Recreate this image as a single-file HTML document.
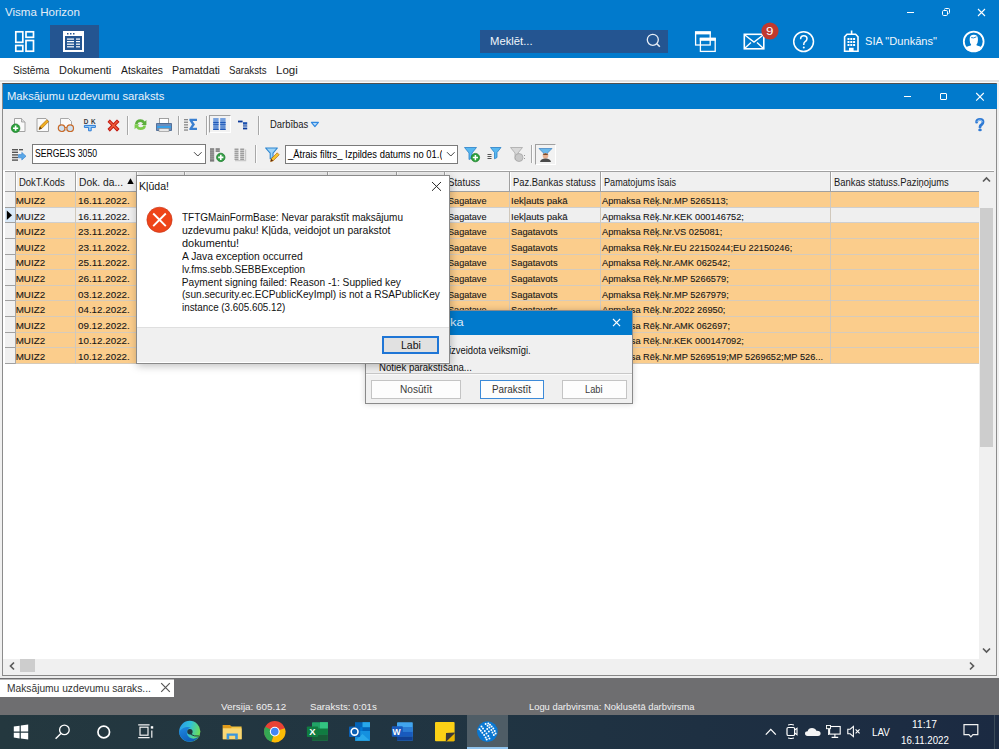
<!DOCTYPE html>
<html><head><meta charset="utf-8">
<style>
*{margin:0;padding:0;box-sizing:border-box}
html,body{width:999px;height:749px;overflow:hidden;background:#f0f0f0;font-family:"Liberation Sans",sans-serif;font-size:12px;color:#000;position:relative}
.a{position:absolute}
.t{position:absolute;white-space:pre;transform-origin:0 0}
svg{overflow:visible}
</style></head><body>
<div class="a" style="left:0px;top:0px;width:999px;height:58px;background:#017acc"></div>
<div class="t" style="left:4.71px;top:7.27px;font-size:11.5px;line-height:11.5px;color:#e4edf7;transform:scaleX(1.0055)">Visma Horizon</div>
<div class="a" style="left:907px;top:12px;width:7px;height:1px;background:#fff"></div>
<svg class="a" style="left:941px;top:7px;" width="10" height="10" viewBox="0 0 10 10"><rect x="1.5" y="3.5" width="5" height="5" rx="1.2" fill="none" stroke="#fff" stroke-width="1"/><path d="M3.5 2.5 Q3.5 1.5 4.5 1.5 H7.5 Q8.5 1.5 8.5 2.5 V5.5 Q8.5 6.5 7.5 6.5" fill="none" stroke="#fff" stroke-width="1"/></svg>
<svg class="a" style="left:977px;top:8px;" width="9" height="9" viewBox="0 0 9 9"><path d="M1 1 L8 8 M8 1 L1 8" stroke="#fff" stroke-width="1.1"/></svg>
<svg class="a" style="left:13px;top:29px;" width="23" height="25" viewBox="0 0 23 25"><g fill="none" stroke="#fff" stroke-width="1.7"><rect x="2.8" y="2.8" width="7" height="10.5"/><rect x="13" y="2.8" width="7.5" height="5.5"/><rect x="2.8" y="16.5" width="7" height="5.7"/><rect x="13" y="11.5" width="7.5" height="10.7"/></g></svg>
<div class="a" style="left:50px;top:25px;width:49px;height:33px;background:#245591"></div>
<svg class="a" style="left:62px;top:30px;" width="23" height="23" viewBox="0 0 23 23"><rect x="1" y="1" width="21" height="21" fill="#fff"/><rect x="3" y="6" width="17" height="14" fill="#245591"/><g fill="#245591"><rect x="5" y="3" width="1.5" height="1.5"/><rect x="8" y="3" width="1.5" height="1.5"/><rect x="11" y="3" width="1.5" height="1.5"/></g><g fill="#fff"><rect x="5" y="8.5" width="7" height="1.2"/><rect x="14" y="8.5" width="4" height="1.2"/><rect x="5" y="11" width="7" height="1.2"/><rect x="14" y="11" width="4" height="1.2"/><rect x="5" y="13.6" width="7" height="1.2"/><rect x="14" y="13.6" width="4" height="1.2"/><rect x="5" y="16.2" width="7" height="1.2"/><rect x="14" y="16.2" width="4" height="1.2"/></g></svg>
<div class="a" style="left:480px;top:30px;width:188px;height:22.5px;background:#245591"></div>
<div class="t" style="left:490.32px;top:36.11px;font-size:10.5px;line-height:10.5px;color:#f2f6fb;transform:scaleX(1.0721)">Meklēt...</div>
<svg class="a" style="left:645px;top:32px;" width="17" height="17" viewBox="0 0 17 17"><circle cx="7.8" cy="7.8" r="5.5" fill="none" stroke="#e8eef6" stroke-width="1.3"/><path d="M11.8 11.8 L14.8 14.8" stroke="#e8eef6" stroke-width="1.6"/></svg>
<svg class="a" style="left:694px;top:30px;" width="23" height="23" viewBox="0 0 23 23"><g fill="none" stroke="#fff" stroke-width="1.3"><rect x="1.6" y="2" width="14.6" height="13"/><rect x="6.4" y="8.4" width="14.8" height="13"/></g><rect x="1" y="1.4" width="15.8" height="3" fill="#fff"/><rect x="5.8" y="7.8" width="16" height="3" fill="#fff"/></svg>
<svg class="a" style="left:742px;top:32px;" width="24" height="19" viewBox="0 0 24 19"><rect x="2.3" y="2.3" width="19.5" height="14.5" fill="none" stroke="#fff" stroke-width="1.6"/><path d="M2.5 2.8 L12 10 L21.5 2.8 M2.5 16.5 L9 10.5 M21.5 16.5 L15 10.5" fill="none" stroke="#fff" stroke-width="1.4"/></svg>
<svg class="a" style="left:761px;top:22px;" width="18" height="18" viewBox="0 0 18 18"><circle cx="9" cy="9" r="8.6" fill="#c0392f"/></svg>
<div class="t" style="left:766.20px;top:27.24px;font-size:10px;line-height:10px;color:#fff;transform:scaleX(1.3295)">9</div>
<svg class="a" style="left:792px;top:30px;" width="24" height="24" viewBox="0 0 24 24"><circle cx="11.6" cy="11.6" r="9.9" fill="none" stroke="#fff" stroke-width="1.5"/></svg>
<svg class="a" style="left:792px;top:30px;" width="24" height="24" viewBox="0 0 24 24"><path d="M8.6 9.2 Q8.6 5.8 11.8 5.8 Q15 5.8 15 8.8 Q15 10.6 12.9 11.8 Q11.8 12.5 11.8 14.2 V15" fill="none" stroke="#fff" stroke-width="1.5"/><circle cx="11.8" cy="17.4" r="1" fill="#fff"/></svg>
<svg class="a" style="left:842px;top:29px;" width="19" height="25" viewBox="0 0 19 25"><g fill="none" stroke="#fff" stroke-width="1.6"><path d="M2.6 22.2 V7.8 L5 5.2 H13.6 L16 7.8 V22.2 Z"/></g><rect x="8.8" y="1.5" width="1.6" height="4" fill="#fff"/><g fill="#fff"><rect x="5.5" y="9" width="2" height="2"/><rect x="8.3" y="9" width="2" height="2"/><rect x="11.1" y="9" width="2" height="2"/><rect x="5.5" y="12" width="2" height="2"/><rect x="8.3" y="12" width="2" height="2"/><rect x="11.1" y="12" width="2" height="2"/><rect x="5.5" y="15" width="2" height="2"/><rect x="8.3" y="15" width="2" height="2"/><rect x="11.1" y="15" width="2" height="2"/><rect x="7" y="18.8" width="4.6" height="3.4"/></g></svg>
<div class="t" style="left:864.93px;top:35.99px;font-size:11px;line-height:11px;color:#f2f6fb;transform:scaleX(1.0088)">SIA "Dunkāns"</div>
<svg class="a" style="left:961px;top:29px;" width="26" height="26" viewBox="0 0 26 26"><circle cx="12.7" cy="12.5" r="9.9" fill="none" stroke="#fff" stroke-width="1.8"/><path d="M4.4 19.4 Q5.8 17.4 9.6 16.6 Q10.2 16.2 10.1 15.4 Q8.7 13.8 8.7 11.4 V9.8 Q8.7 5.8 12.8 5.8 Q16.9 5.8 16.9 9.8 V11.4 Q16.9 13.8 15.5 15.4 Q15.4 16.2 16 16.6 Q19.8 17.4 21.2 19.4 Q18.2 22.6 12.8 22.6 Q7.4 22.6 4.4 19.4 Z" fill="#fff"/><path d="M10.2 8.6 Q12.6 9.6 15.4 7.8" stroke="#017acc" stroke-width="0.9" fill="none"/></svg>
<div class="a" style="left:0px;top:58px;width:999px;height:22px;background:#fff"></div>
<div class="t" style="left:13.30px;top:65.11px;font-size:10.8px;line-height:10.8px;color:#1a1a1a;transform:scaleX(0.9332)">Sistēma</div>
<div class="t" style="left:59.24px;top:65.11px;font-size:10.8px;line-height:10.8px;color:#1a1a1a;transform:scaleX(1.0117)">Dokumenti</div>
<div class="t" style="left:120.98px;top:65.11px;font-size:10.8px;line-height:10.8px;color:#1a1a1a;transform:scaleX(0.9549)">Atskaites</div>
<div class="t" style="left:172.06px;top:65.11px;font-size:10.8px;line-height:10.8px;color:#1a1a1a;transform:scaleX(0.9867)">Pamatdati</div>
<div class="t" style="left:229.02px;top:65.11px;font-size:10.8px;line-height:10.8px;color:#1a1a1a;transform:scaleX(0.8915)">Saraksts</div>
<div class="t" style="left:275.71px;top:65.11px;font-size:10.8px;line-height:10.8px;color:#1a1a1a;transform:scaleX(1.0666)">Logi</div>
<div class="a" style="left:0px;top:80px;width:999px;height:2.2px;background:#e2e2e2"></div>
<div class="a" style="left:0px;top:82.2px;width:999px;height:1px;background:#fafafa"></div>
<div class="a" style="left:2px;top:83px;width:995px;height:593px;background:#f0f0f0;border:1px solid #8c8c8c;border-top-color:#505050;border-bottom-color:#888"></div>
<div class="a" style="left:3px;top:84px;width:994px;height:25px;background:#017acc"></div>
<div class="t" style="left:7.23px;top:90.89px;font-size:11px;line-height:11px;color:#eaf2fa;transform:scaleX(1.0207)">Maksājumu uzdevumu saraksts</div>
<div class="a" style="left:903.5px;top:96px;width:7.5px;height:1px;background:#fff"></div>
<div class="a" style="left:940.3px;top:93.2px;width:6.6px;height:6.6px;border:1.1px solid #fff;border-radius:1px"></div>
<svg class="a" style="left:975px;top:92px;" width="10" height="10" viewBox="0 0 10 10"><path d="M1.2 1 L8.8 8.6 M8.8 1 L1.2 8.6" stroke="#fff" stroke-width="1.1"/></svg>
<div class="a" style="left:3px;top:170px;width:991px;height:489px;background:#fff"></div>
<div class="a" style="left:5px;top:171px;width:989px;height:1px;background:#a0a0a0"></div>
<div class="a" style="left:0px;top:676px;width:999px;height:2px;background:#ececec"></div>
<div class="a" style="left:0px;top:678px;width:999px;height:36.5px;background:#6e6e70"></div>
<div class="a" style="left:0px;top:678.5px;width:174px;height:18.3px;background:#fff;border-top:1px solid #b8b8b8"></div>
<div class="t" style="left:6.59px;top:682.53px;font-size:10.6px;line-height:10.6px;color:#333;transform:scaleX(0.9655)">Maksājumu uzdevumu saraks...</div>
<svg class="a" style="left:160px;top:682px;" width="11" height="11" viewBox="0 0 11 11"><path d="M1.2 1.2 L9.8 9.8 M9.8 1.2 L1.2 9.8" stroke="#555" stroke-width="1.2"/></svg>
<div class="t" style="left:220.91px;top:701.80px;font-size:9.8px;line-height:9.8px;color:#f0f0f0;transform:scaleX(1.0055)">Versija: 605.12</div>
<div class="t" style="left:309.72px;top:701.80px;font-size:9.8px;line-height:9.8px;color:#f0f0f0;transform:scaleX(0.9901)">Saraksts: 0:01s</div>
<div class="t" style="left:529.14px;top:701.80px;font-size:9.8px;line-height:9.8px;color:#f0f0f0;transform:scaleX(0.9559)">Logu darbvirsma: Noklusētā darbvirsma</div>
<div class="a" style="left:0px;top:714.5px;width:999px;height:34.5px;background:linear-gradient(90deg,#24383f,#203442 50%,#1b2a42)"></div>
<div class="a" style="left:127px;top:115.5px;width:1px;height:19.0px;background:#a8a8a8"></div>
<div class="a" style="left:128px;top:115.5px;width:1px;height:19.0px;background:#fcfcfc"></div>
<div class="a" style="left:178px;top:115.5px;width:1px;height:19.0px;background:#a8a8a8"></div>
<div class="a" style="left:179px;top:115.5px;width:1px;height:19.0px;background:#fcfcfc"></div>
<div class="a" style="left:205.5px;top:115.5px;width:1px;height:19.0px;background:#a8a8a8"></div>
<div class="a" style="left:206.5px;top:115.5px;width:1px;height:19.0px;background:#fcfcfc"></div>
<div class="a" style="left:257.5px;top:115.5px;width:1px;height:19.0px;background:#a8a8a8"></div>
<div class="a" style="left:258.5px;top:115.5px;width:1px;height:19.0px;background:#fcfcfc"></div>
<svg class="a" style="left:11px;top:117px;" width="16" height="16" viewBox="0 0 16 16"><path d="M3.5 1.5 H10.5 L14 5 V14.5 H3.5 Z" fill="#fafafa" stroke="#9a9a9a" stroke-width="0.9"/><path d="M10.5 1.5 V5 H14" fill="#ddd" stroke="#9a9a9a" stroke-width="0.8"/><circle cx="4.6" cy="11.2" r="4.3" fill="#2aa13a" stroke="#1d7a2a" stroke-width="0.7"/><path d="M4.6 8.6 V13.8 M2 11.2 H7.2" stroke="#fff" stroke-width="1.6"/></svg>
<svg class="a" style="left:35px;top:117px;" width="16" height="16" viewBox="0 0 16 16"><path d="M2 1.5 H11 L13.5 4 V14.5 H2 Z" fill="#fafafa" stroke="#9a9a9a" stroke-width="0.9"/><path d="M4 12.5 L5 9.5 L11.8 2.8 L13.6 4.6 L6.8 11.4 Z" fill="#f0b020" stroke="#b06a10" stroke-width="0.7"/><path d="M4 12.5 L5 9.5 L6.8 11.4 Z" fill="#5a3a1a"/></svg>
<svg class="a" style="left:57px;top:117px;" width="18" height="16" viewBox="0 0 18 16"><path d="M3.5 1.5 H11.5 L14.5 4.5 V13 H3.5 Z" fill="#fafafa" stroke="#a0a0a0" stroke-width="0.9"/><circle cx="4.6" cy="11.2" r="3.3" fill="#cfe0f0" stroke="#c86a28" stroke-width="1.2"/><circle cx="13.2" cy="11.2" r="3.3" fill="#cfe0f0" stroke="#c86a28" stroke-width="1.2"/><path d="M7.9 10.6 H9.9" stroke="#c86a28" stroke-width="1"/></svg>
<svg class="a" style="left:83px;top:117px;" width="14" height="16" viewBox="0 0 14 16"><text x="0.8" y="6.6" font-family="Liberation Sans" font-size="6.4" font-weight="700" fill="#3a3a3a">D</text><text x="8" y="6.6" font-family="Liberation Sans" font-size="6.4" font-weight="700" fill="#3a3a3a">K</text><path d="M1.4 8.4 H12.4 V10.4 H8.2 V13.8 H5.6 V10.4 H1.4 Z" fill="#9ccff6" stroke="#2a7ad6" stroke-width="1" stroke-linejoin="round"/></svg>
<svg class="a" style="left:106px;top:118px;" width="15" height="15" viewBox="0 0 15 15"><path d="M2.2 3.8 L3.8 2.2 L7.4 5.8 L11 2.2 L12.8 3.8 L9.2 7.4 L12.8 11 L11 12.8 L7.4 9.2 L3.8 12.8 L2.2 11 L5.8 7.4 Z" fill="#f2603a" stroke="#c41e16" stroke-width="1.1" stroke-linejoin="round"/></svg>
<svg class="a" style="left:132px;top:117px;" width="17" height="15" viewBox="0 0 17 15"><path d="M3 7 Q3.5 2.2 8.5 2.2 Q11.4 2.2 12.8 4.4 L14.4 3 V8 H9.4 L11 6.4 Q10.2 4.9 8.5 4.9 Q6 4.9 5.6 7 Z" fill="#5cae3c"/><path d="M14 8.4 Q13.5 13 8.5 13 Q5.6 13 4.2 10.8 L2.6 12.2 V7.2 H7.6 L6 8.8 Q6.8 10.3 8.5 10.3 Q11 10.3 11.4 8.4 Z" fill="#7ccc4c"/></svg>
<svg class="a" style="left:155px;top:117px;" width="18" height="16" viewBox="0 0 18 16"><rect x="4.5" y="1.5" width="9" height="5" fill="#fff" stroke="#8a8a8a" stroke-width="0.8"/><path d="M1.5 6.5 H16.5 V13.5 H1.5 Z" fill="#6c8ebc" stroke="#3e5e8a" stroke-width="0.8"/><rect x="2" y="9" width="14" height="2" fill="#3aa0e8"/><rect x="4" y="11.5" width="10" height="3" fill="#e8e8e8" stroke="#888" stroke-width="0.6"/></svg>
<svg class="a" style="left:183px;top:117px;" width="16" height="15" viewBox="0 0 16 15"><g fill="#888"><rect x="1" y="2" width="4" height="1.3"/><rect x="1" y="4.6" width="4" height="1.3"/><rect x="1" y="7.2" width="4" height="1.3"/><rect x="1" y="9.8" width="4" height="1.3"/><rect x="1" y="12.4" width="4" height="1.3"/></g><path d="M6.4 1.8 H14 V4 H9.6 L12 7.4 L9.6 10.8 H14 V13 H6.4 V11.4 L9 7.4 L6.4 3.4 Z" fill="#3a7fd0"/></svg>
<div class="a" style="left:209px;top:115px;width:21.8px;height:18.2px;background:#f2f2f2;border-top:1px solid #a0a0a0;border-left:1px solid #a0a0a0;border-bottom:1px solid #fff;border-right:1px solid #fff"></div>
<svg class="a" style="left:213px;top:118px;" width="13" height="13" viewBox="0 0 13 13"><defs><linearGradient id="cg" x1="0" y1="0" x2="0" y2="1"><stop offset="0" stop-color="#7aa4e0"/><stop offset="1" stop-color="#5a88d0"/></linearGradient></defs><rect x="0.2" y="0" width="5.4" height="12" fill="url(#cg)"/><rect x="7.2" y="0" width="5.4" height="12" fill="url(#cg)"/><g fill="#1f58b8"><rect x="0.2" y="4" width="5.4" height="1"/><rect x="7.2" y="4" width="5.4" height="1"/><rect x="0.2" y="6" width="5.4" height="0.8"/><rect x="7.2" y="6" width="5.4" height="0.8"/><rect x="0.2" y="11" width="5.4" height="1"/><rect x="7.2" y="11" width="5.4" height="1"/></g></svg>
<svg class="a" style="left:237px;top:119px;" width="12" height="12" viewBox="0 0 12 12"><rect x="1" y="1.6" width="4.6" height="1.8" fill="#0d3a9a"/><rect x="6" y="3.2" width="4.2" height="2.4" fill="#1a50b0"/><rect x="6" y="6.4" width="4.2" height="1.2" fill="#0d3a9a"/><rect x="6" y="7.6" width="4.2" height="1.4" fill="#8aa8d8"/><rect x="6" y="9" width="4.2" height="1.4" fill="#0d3a9a"/></svg>
<div class="t" style="left:269.53px;top:118.91px;font-size:10.5px;line-height:10.5px;color:#1a1a1a;transform:scaleX(0.8972)">Darbības</div>
<svg class="a" style="left:310px;top:121px;" width="10" height="7" viewBox="0 0 10 7"><path d="M1.4 1.4 H8.4 L4.9 5.6 Z" fill="#b8dcf8" stroke="#3088e0" stroke-width="1.2" stroke-linejoin="round"/></svg>
<svg class="a" style="left:972px;top:117px;" width="14" height="16" viewBox="0 0 14 16"><path d="M4.6 5.2 Q4.6 2.4 8 2.4 Q11 2.4 11 5 Q11 6.8 9.4 7.8 Q8 8.6 8 10.2" fill="none" stroke="#2f7ad4" stroke-width="2.8" stroke-linecap="round"/><path d="M5 4.6 Q5.6 3 8 3 Q10.2 3.2 10.4 4.8" fill="none" stroke="#a8d0f6" stroke-width="0.9" stroke-linecap="round"/><ellipse cx="8" cy="13" rx="1.8" ry="1.3" fill="#2f7ad4"/></svg>
<svg class="a" style="left:11px;top:148px;" width="16" height="14" viewBox="0 0 16 14"><g fill="#555"><rect x="1" y="1" width="6" height="1.4"/><rect x="1" y="3.6" width="6" height="1.4"/><rect x="1" y="6.2" width="6" height="1.4"/><rect x="1" y="8.8" width="6" height="1.4"/><rect x="1" y="11.4" width="6" height="1.4"/><rect x="8" y="1" width="4" height="1.4"/></g><path d="M7.5 6.6 H10.8 V4.4 L15 8.2 L10.8 12 V9.8 H7.5 Z" fill="#5aa8e8" stroke="#2f7fd0" stroke-width="0.6"/></svg>
<div class="a" style="left:32px;top:144.3px;width:174px;height:19.5px;background:#fff;border:1px solid #7a7a7a"></div>
<svg class="a" style="left:193px;top:151px;" width="10" height="7" viewBox="0 0 10 7"><path d="M1 1.2 L4.8 5 L8.6 1.2" fill="none" stroke="#444" stroke-width="1"/></svg>
<div class="t" style="left:35.08px;top:148.94px;font-size:10px;line-height:10px;color:#000;transform:scaleX(0.8650)">SERGEJS 3050</div>
<svg class="a" style="left:209px;top:147px;" width="18" height="15" viewBox="0 0 18 15"><g fill="#5e5e5e"><rect x="1" y="1.4" width="4.2" height="1.3"/><rect x="1" y="3.4" width="4.2" height="1.3"/><rect x="1" y="5.4" width="4.2" height="1.3"/><rect x="1" y="7.4" width="4.2" height="1.3"/><rect x="1" y="9.4" width="4.2" height="1.3"/><rect x="1" y="11.4" width="4.2" height="1.3"/><rect x="1" y="13.2" width="4.2" height="1.3"/><rect x="6.6" y="1.4" width="4.2" height="1.3"/><rect x="6.6" y="3.4" width="4.2" height="1.3"/></g><circle cx="11.8" cy="10.4" r="4.2" fill="#34a046" stroke="#1f7a30" stroke-width="0.8"/><path d="M11.8 7.8 V13 M9.2 10.4 H14.4" stroke="#fff" stroke-width="1.6"/></svg>
<svg class="a" style="left:233px;top:147px;" width="16" height="15" viewBox="0 0 16 15"><path d="M12.6 2.5 V13.6 H2" fill="none" stroke="#c8c8c8" stroke-width="1.2"/><g fill="#8a8a8a"><rect x="1.5" y="1.6" width="4" height="1.2"/><rect x="7.2" y="1.6" width="4" height="1.2"/><rect x="1.5" y="3.6" width="4" height="1.2"/><rect x="7.2" y="3.6" width="4" height="1.2"/><rect x="1.5" y="5.6" width="4" height="1.2"/><rect x="7.2" y="5.6" width="4" height="1.2"/><rect x="1.5" y="7.6" width="4" height="1.2"/><rect x="7.2" y="7.6" width="4" height="1.2"/><rect x="1.5" y="9.6" width="4" height="1.2"/><rect x="7.2" y="9.6" width="4" height="1.2"/><rect x="1.5" y="11.6" width="4" height="1.2"/><rect x="7.2" y="11.6" width="4" height="1.2"/></g></svg>
<div class="a" style="left:255.2px;top:145px;width:1px;height:18px;background:#a8a8a8"></div>
<div class="a" style="left:256.2px;top:145px;width:1px;height:18px;background:#fcfcfc"></div>
<svg class="a" style="left:264px;top:146px;" width="17" height="17" viewBox="0 0 17 17"><path d="M1.6 2 H13.4 L9 7.2 V11.6 L6.2 12.8 V7.2 Z" fill="#9fd4f6" stroke="#2f86d0" stroke-width="1.1" stroke-linejoin="round"/><path d="M6.6 15.6 L7.2 12.8 L13.2 6.8 L15.2 8.8 L9.2 14.8 Z" fill="#f4c430" stroke="#b86a10" stroke-width="0.7"/><path d="M6.6 15.6 L7.2 12.8 L9.2 14.8 Z" fill="#5a2a10"/></svg>
<div class="a" style="left:285.3px;top:144.6px;width:173px;height:19px;background:#fff;border:1px solid #7a7a7a"></div>
<svg class="a" style="left:446px;top:151px;" width="10" height="7" viewBox="0 0 10 7"><path d="M1 1.2 L4.8 5 L8.6 1.2" fill="none" stroke="#444" stroke-width="1"/></svg>
<div class="t" style="left:288.23px;top:150.27px;font-size:10.2px;line-height:10.2px;color:#000;transform:scaleX(0.9251)">_Ātrais filtrs_ Izpildes datums no 01.(</div>
<div class="a" style="left:442px;top:146px;width:3px;height:16px;background:#fff"></div>
<svg class="a" style="left:463px;top:146px;" width="18" height="17" viewBox="0 0 18 17"><path d="M1.5 1.5 H13.5 L9 7 V12 L6 13.5 V7 Z" fill="#58b8f0" stroke="#2a80c8" stroke-width="0.8"/><circle cx="12.4" cy="11.6" r="4.2" fill="#2aa13a" stroke="#1d7a2a" stroke-width="0.7"/><path d="M12.4 9 V14.2 M9.8 11.6 H15" stroke="#fff" stroke-width="1.5"/></svg>
<svg class="a" style="left:487px;top:146px;" width="15" height="16" viewBox="0 0 15 16"><path d="M3.5 1.5 H14 L10 6.5 V11.5 L7.5 12.8 V6.5 Z" fill="#58b8f0" stroke="#2a80c8" stroke-width="0.8"/><g fill="#555"><rect x="0.5" y="8" width="4" height="1"/><rect x="0.5" y="10" width="4" height="1"/><rect x="0.5" y="12" width="4" height="1"/></g></svg>
<svg class="a" style="left:509px;top:146px;" width="18" height="17" viewBox="0 0 18 17"><path d="M1.5 1.5 H13.5 L9 7 V12 L6 13.5 V7 Z" fill="#d8d8d8" stroke="#a8a8a8" stroke-width="0.8"/><circle cx="10" cy="11.5" r="4" fill="#c8c8c8" stroke="#a0a0a0" stroke-width="0.7"/><path d="M15.5 9 V10 M15.5 12 V13" stroke="#999" stroke-width="1"/></svg>
<div class="a" style="left:531.4px;top:145px;width:1px;height:18px;background:#a8a8a8"></div>
<div class="a" style="left:532.4px;top:145px;width:1px;height:18px;background:#fcfcfc"></div>
<div class="a" style="left:534.6px;top:144.4px;width:21.4px;height:20.8px;background:#f2f2f2;border-top:1px solid #a0a0a0;border-left:1px solid #a0a0a0;border-bottom:1px solid #fff;border-right:1px solid #fff"></div>
<svg class="a" style="left:537px;top:147px;" width="17" height="16" viewBox="0 0 17 16"><path d="M2 1.5 H15 L10.5 6 V9 H6.5 V6 Z" fill="#6ab8ea" stroke="#3a80c0" stroke-width="0.7"/><circle cx="8.5" cy="8.8" r="2.8" fill="#e8b090"/><path d="M5.6 8 Q8.5 4.6 11.4 8" fill="#7a4a2a"/><path d="M3 15 Q3.5 11.4 8.5 11.4 Q13.5 11.4 14 15 Z" fill="#4a4a4a"/></svg>
<div class="a" style="left:5px;top:171px;width:974px;height:20.69999999999999px;background:#f0f0f0"></div>
<div class="a" style="left:5px;top:170.5px;width:989px;height:1px;background:#a0a0a0"></div>
<div class="a" style="left:5px;top:191.2px;width:974px;height:1px;background:#a0a0a0"></div>
<div class="a" style="left:15px;top:171px;width:1px;height:20.69999999999999px;background:#a0a0a0"></div>
<div class="a" style="left:16px;top:171.5px;width:1px;height:19.69999999999999px;background:#fff"></div>
<div class="a" style="left:75px;top:171px;width:1px;height:20.69999999999999px;background:#a0a0a0"></div>
<div class="a" style="left:76px;top:171.5px;width:1px;height:19.69999999999999px;background:#fff"></div>
<div class="a" style="left:136px;top:171px;width:1px;height:20.69999999999999px;background:#a0a0a0"></div>
<div class="a" style="left:137px;top:171.5px;width:1px;height:19.69999999999999px;background:#fff"></div>
<div class="a" style="left:184px;top:171px;width:1px;height:20.69999999999999px;background:#a0a0a0"></div>
<div class="a" style="left:185px;top:171.5px;width:1px;height:19.69999999999999px;background:#fff"></div>
<div class="a" style="left:327px;top:171px;width:1px;height:20.69999999999999px;background:#a0a0a0"></div>
<div class="a" style="left:328px;top:171.5px;width:1px;height:19.69999999999999px;background:#fff"></div>
<div class="a" style="left:396px;top:171px;width:1px;height:20.69999999999999px;background:#a0a0a0"></div>
<div class="a" style="left:397px;top:171.5px;width:1px;height:19.69999999999999px;background:#fff"></div>
<div class="a" style="left:444px;top:171px;width:1px;height:20.69999999999999px;background:#a0a0a0"></div>
<div class="a" style="left:445px;top:171.5px;width:1px;height:19.69999999999999px;background:#fff"></div>
<div class="a" style="left:509px;top:171px;width:1px;height:20.69999999999999px;background:#a0a0a0"></div>
<div class="a" style="left:510px;top:171.5px;width:1px;height:19.69999999999999px;background:#fff"></div>
<div class="a" style="left:600px;top:171px;width:1px;height:20.69999999999999px;background:#a0a0a0"></div>
<div class="a" style="left:601px;top:171.5px;width:1px;height:19.69999999999999px;background:#fff"></div>
<div class="a" style="left:830px;top:171px;width:1px;height:20.69999999999999px;background:#a0a0a0"></div>
<div class="a" style="left:831px;top:171.5px;width:1px;height:19.69999999999999px;background:#fff"></div>
<div class="a" style="left:979px;top:171px;width:1px;height:20.69999999999999px;background:#a0a0a0"></div>
<div class="t" style="left:18.73px;top:177.84px;font-size:10px;line-height:10px;color:#1a1a1a;transform:scaleX(0.9478)">DokT.Kods</div>
<div class="t" style="left:79.18px;top:177.84px;font-size:10px;line-height:10px;color:#1a1a1a;transform:scaleX(1.0285)">Dok. da...</div>
<svg class="a" style="left:126px;top:177px;" width="9" height="8" viewBox="0 0 9 8"><path d="M1.3 7 L4.5 1.2 L7.7 7 Z" fill="#000"/></svg>
<div class="t" style="left:448.22px;top:177.84px;font-size:10px;line-height:10px;color:#1a1a1a;transform:scaleX(0.9639)">Statuss</div>
<div class="t" style="left:512.74px;top:177.84px;font-size:10px;line-height:10px;color:#1a1a1a;transform:scaleX(0.9408)">Paz.Bankas statuss</div>
<div class="t" style="left:603.75px;top:177.84px;font-size:10px;line-height:10px;color:#1a1a1a;transform:scaleX(0.9122)">Pamatojums īsais</div>
<div class="t" style="left:833.54px;top:177.84px;font-size:10px;line-height:10px;color:#1a1a1a;transform:scaleX(0.9382)">Bankas statuss.Paziņojums</div>
<div class="a" style="left:15.5px;top:192.2px;width:963.5px;height:15.6px;background:#fbcd8c"></div>
<div class="a" style="left:5px;top:192.2px;width:10.5px;height:15.6px;background:#f0f0f0"></div>
<div class="a" style="left:5px;top:206.79999999999998px;width:10px;height:1px;background:#a0a0a0"></div>
<div class="a" style="left:15.5px;top:206.79999999999998px;width:963.5px;height:1px;background:#cfcfcf"></div>
<div class="a" style="left:15px;top:192.2px;width:1px;height:15.6px;background:#a8a8a8"></div>
<div class="a" style="left:75px;top:192.2px;width:1px;height:15.6px;background:#d0c8bc"></div>
<div class="a" style="left:136px;top:192.2px;width:1px;height:15.6px;background:#d0c8bc"></div>
<div class="a" style="left:184px;top:192.2px;width:1px;height:15.6px;background:#d0c8bc"></div>
<div class="a" style="left:327px;top:192.2px;width:1px;height:15.6px;background:#d0c8bc"></div>
<div class="a" style="left:396px;top:192.2px;width:1px;height:15.6px;background:#d0c8bc"></div>
<div class="a" style="left:444px;top:192.2px;width:1px;height:15.6px;background:#d0c8bc"></div>
<div class="a" style="left:509px;top:192.2px;width:1px;height:15.6px;background:#d0c8bc"></div>
<div class="a" style="left:600px;top:192.2px;width:1px;height:15.6px;background:#d0c8bc"></div>
<div class="a" style="left:830px;top:192.2px;width:1px;height:15.6px;background:#d0c8bc"></div>
<div class="t" style="left:15.71px;top:196.00px;font-size:9.8px;line-height:9.8px;color:#111;-webkit-text-stroke:0.1px #333">MUIZ2</div>
<div class="t" style="left:78.00px;top:196.00px;font-size:9.8px;line-height:9.8px;color:#111;transform:scaleX(1.0169);-webkit-text-stroke:0.1px #333">16.11.2022.</div>
<div class="t" style="left:447.85px;top:196.00px;font-size:9.8px;line-height:9.8px;color:#111;transform:scaleX(0.9296);-webkit-text-stroke:0.1px #333">Sagatave</div>
<div class="t" style="left:510.92px;top:196.00px;font-size:9.8px;line-height:9.8px;color:#111;transform:scaleX(0.9795);-webkit-text-stroke:0.1px #333">Iekļauts pakā</div>
<div class="t" style="left:601.74px;top:196.00px;font-size:9.8px;line-height:9.8px;color:#111;transform:scaleX(0.9440);-webkit-text-stroke:0.1px #333">Apmaksa Rēķ.Nr.MP 5265113;</div>
<div class="a" style="left:15.5px;top:207.79999999999998px;width:963.5px;height:15.6px;background:#efefef"></div>
<div class="a" style="left:5px;top:207.79999999999998px;width:10.5px;height:15.6px;background:#d9e9f8"></div>
<div class="a" style="left:5px;top:222.39999999999998px;width:10px;height:1px;background:#a0a0a0"></div>
<div class="a" style="left:15.5px;top:222.39999999999998px;width:963.5px;height:1px;background:#cfcfcf"></div>
<div class="a" style="left:15px;top:207.79999999999998px;width:1px;height:15.6px;background:#a8a8a8"></div>
<div class="a" style="left:75px;top:207.79999999999998px;width:1px;height:15.6px;background:#d0c8bc"></div>
<div class="a" style="left:136px;top:207.79999999999998px;width:1px;height:15.6px;background:#d0c8bc"></div>
<div class="a" style="left:184px;top:207.79999999999998px;width:1px;height:15.6px;background:#d0c8bc"></div>
<div class="a" style="left:327px;top:207.79999999999998px;width:1px;height:15.6px;background:#d0c8bc"></div>
<div class="a" style="left:396px;top:207.79999999999998px;width:1px;height:15.6px;background:#d0c8bc"></div>
<div class="a" style="left:444px;top:207.79999999999998px;width:1px;height:15.6px;background:#d0c8bc"></div>
<div class="a" style="left:509px;top:207.79999999999998px;width:1px;height:15.6px;background:#d0c8bc"></div>
<div class="a" style="left:600px;top:207.79999999999998px;width:1px;height:15.6px;background:#d0c8bc"></div>
<div class="a" style="left:830px;top:207.79999999999998px;width:1px;height:15.6px;background:#d0c8bc"></div>
<div class="t" style="left:15.71px;top:211.60px;font-size:9.8px;line-height:9.8px;color:#111;-webkit-text-stroke:0.1px #333">MUIZ2</div>
<div class="t" style="left:78.00px;top:211.60px;font-size:9.8px;line-height:9.8px;color:#111;transform:scaleX(1.0169);-webkit-text-stroke:0.1px #333">16.11.2022.</div>
<div class="t" style="left:447.85px;top:211.60px;font-size:9.8px;line-height:9.8px;color:#111;transform:scaleX(0.9296);-webkit-text-stroke:0.1px #333">Sagatave</div>
<div class="t" style="left:510.92px;top:211.60px;font-size:9.8px;line-height:9.8px;color:#111;transform:scaleX(0.9795);-webkit-text-stroke:0.1px #333">Iekļauts pakā</div>
<div class="t" style="left:601.74px;top:211.60px;font-size:9.8px;line-height:9.8px;color:#111;transform:scaleX(0.9440);-webkit-text-stroke:0.1px #333">Apmaksa Rēķ.Nr.KEK 000146752;</div>
<div class="a" style="left:15.5px;top:223.39999999999998px;width:963.5px;height:15.6px;background:#fbcd8c"></div>
<div class="a" style="left:5px;top:223.39999999999998px;width:10.5px;height:15.6px;background:#f0f0f0"></div>
<div class="a" style="left:5px;top:237.99999999999997px;width:10px;height:1px;background:#a0a0a0"></div>
<div class="a" style="left:15.5px;top:237.99999999999997px;width:963.5px;height:1px;background:#d6cbbb"></div>
<div class="a" style="left:15px;top:223.39999999999998px;width:1px;height:15.6px;background:#a8a8a8"></div>
<div class="a" style="left:75px;top:223.39999999999998px;width:1px;height:15.6px;background:#d0c8bc"></div>
<div class="a" style="left:136px;top:223.39999999999998px;width:1px;height:15.6px;background:#d0c8bc"></div>
<div class="a" style="left:184px;top:223.39999999999998px;width:1px;height:15.6px;background:#d0c8bc"></div>
<div class="a" style="left:327px;top:223.39999999999998px;width:1px;height:15.6px;background:#d0c8bc"></div>
<div class="a" style="left:396px;top:223.39999999999998px;width:1px;height:15.6px;background:#d0c8bc"></div>
<div class="a" style="left:444px;top:223.39999999999998px;width:1px;height:15.6px;background:#d0c8bc"></div>
<div class="a" style="left:509px;top:223.39999999999998px;width:1px;height:15.6px;background:#d0c8bc"></div>
<div class="a" style="left:600px;top:223.39999999999998px;width:1px;height:15.6px;background:#d0c8bc"></div>
<div class="a" style="left:830px;top:223.39999999999998px;width:1px;height:15.6px;background:#d0c8bc"></div>
<div class="t" style="left:15.71px;top:227.20px;font-size:9.8px;line-height:9.8px;color:#111;-webkit-text-stroke:0.1px #333">MUIZ2</div>
<div class="t" style="left:78.00px;top:227.20px;font-size:9.8px;line-height:9.8px;color:#111;transform:scaleX(1.0169);-webkit-text-stroke:0.1px #333">23.11.2022.</div>
<div class="t" style="left:447.85px;top:227.20px;font-size:9.8px;line-height:9.8px;color:#111;transform:scaleX(0.9296);-webkit-text-stroke:0.1px #333">Sagatave</div>
<div class="t" style="left:510.94px;top:227.20px;font-size:9.8px;line-height:9.8px;color:#111;transform:scaleX(0.9500);-webkit-text-stroke:0.1px #333">Sagatavots</div>
<div class="t" style="left:601.74px;top:227.20px;font-size:9.8px;line-height:9.8px;color:#111;transform:scaleX(0.9440);-webkit-text-stroke:0.1px #333">Apmaksa Rēķ.Nr.VS 025081;</div>
<div class="a" style="left:15.5px;top:239.0px;width:963.5px;height:15.6px;background:#fbcd8c"></div>
<div class="a" style="left:5px;top:239.0px;width:10.5px;height:15.6px;background:#f0f0f0"></div>
<div class="a" style="left:5px;top:253.6px;width:10px;height:1px;background:#a0a0a0"></div>
<div class="a" style="left:15.5px;top:253.6px;width:963.5px;height:1px;background:#d6cbbb"></div>
<div class="a" style="left:15px;top:239.0px;width:1px;height:15.6px;background:#a8a8a8"></div>
<div class="a" style="left:75px;top:239.0px;width:1px;height:15.6px;background:#d0c8bc"></div>
<div class="a" style="left:136px;top:239.0px;width:1px;height:15.6px;background:#d0c8bc"></div>
<div class="a" style="left:184px;top:239.0px;width:1px;height:15.6px;background:#d0c8bc"></div>
<div class="a" style="left:327px;top:239.0px;width:1px;height:15.6px;background:#d0c8bc"></div>
<div class="a" style="left:396px;top:239.0px;width:1px;height:15.6px;background:#d0c8bc"></div>
<div class="a" style="left:444px;top:239.0px;width:1px;height:15.6px;background:#d0c8bc"></div>
<div class="a" style="left:509px;top:239.0px;width:1px;height:15.6px;background:#d0c8bc"></div>
<div class="a" style="left:600px;top:239.0px;width:1px;height:15.6px;background:#d0c8bc"></div>
<div class="a" style="left:830px;top:239.0px;width:1px;height:15.6px;background:#d0c8bc"></div>
<div class="t" style="left:15.71px;top:242.80px;font-size:9.8px;line-height:9.8px;color:#111;-webkit-text-stroke:0.1px #333">MUIZ2</div>
<div class="t" style="left:78.00px;top:242.80px;font-size:9.8px;line-height:9.8px;color:#111;transform:scaleX(1.0169);-webkit-text-stroke:0.1px #333">23.11.2022.</div>
<div class="t" style="left:447.85px;top:242.80px;font-size:9.8px;line-height:9.8px;color:#111;transform:scaleX(0.9296);-webkit-text-stroke:0.1px #333">Sagatave</div>
<div class="t" style="left:510.94px;top:242.80px;font-size:9.8px;line-height:9.8px;color:#111;transform:scaleX(0.9500);-webkit-text-stroke:0.1px #333">Sagatavots</div>
<div class="t" style="left:601.74px;top:242.80px;font-size:9.8px;line-height:9.8px;color:#111;transform:scaleX(0.9440);-webkit-text-stroke:0.1px #333">Apmaksa Rēķ.Nr.EU 22150244;EU 22150246;</div>
<div class="a" style="left:15.5px;top:254.6px;width:963.5px;height:15.6px;background:#fbcd8c"></div>
<div class="a" style="left:5px;top:254.6px;width:10.5px;height:15.6px;background:#f0f0f0"></div>
<div class="a" style="left:5px;top:269.2px;width:10px;height:1px;background:#a0a0a0"></div>
<div class="a" style="left:15.5px;top:269.2px;width:963.5px;height:1px;background:#d6cbbb"></div>
<div class="a" style="left:15px;top:254.6px;width:1px;height:15.6px;background:#a8a8a8"></div>
<div class="a" style="left:75px;top:254.6px;width:1px;height:15.6px;background:#d0c8bc"></div>
<div class="a" style="left:136px;top:254.6px;width:1px;height:15.6px;background:#d0c8bc"></div>
<div class="a" style="left:184px;top:254.6px;width:1px;height:15.6px;background:#d0c8bc"></div>
<div class="a" style="left:327px;top:254.6px;width:1px;height:15.6px;background:#d0c8bc"></div>
<div class="a" style="left:396px;top:254.6px;width:1px;height:15.6px;background:#d0c8bc"></div>
<div class="a" style="left:444px;top:254.6px;width:1px;height:15.6px;background:#d0c8bc"></div>
<div class="a" style="left:509px;top:254.6px;width:1px;height:15.6px;background:#d0c8bc"></div>
<div class="a" style="left:600px;top:254.6px;width:1px;height:15.6px;background:#d0c8bc"></div>
<div class="a" style="left:830px;top:254.6px;width:1px;height:15.6px;background:#d0c8bc"></div>
<div class="t" style="left:15.71px;top:258.40px;font-size:9.8px;line-height:9.8px;color:#111;-webkit-text-stroke:0.1px #333">MUIZ2</div>
<div class="t" style="left:78.00px;top:258.40px;font-size:9.8px;line-height:9.8px;color:#111;transform:scaleX(1.0169);-webkit-text-stroke:0.1px #333">25.11.2022.</div>
<div class="t" style="left:447.85px;top:258.40px;font-size:9.8px;line-height:9.8px;color:#111;transform:scaleX(0.9296);-webkit-text-stroke:0.1px #333">Sagatave</div>
<div class="t" style="left:510.94px;top:258.40px;font-size:9.8px;line-height:9.8px;color:#111;transform:scaleX(0.9500);-webkit-text-stroke:0.1px #333">Sagatavots</div>
<div class="t" style="left:601.74px;top:258.40px;font-size:9.8px;line-height:9.8px;color:#111;transform:scaleX(0.9440);-webkit-text-stroke:0.1px #333">Apmaksa Rēķ.Nr.AMK 062542;</div>
<div class="a" style="left:15.5px;top:270.2px;width:963.5px;height:15.6px;background:#fbcd8c"></div>
<div class="a" style="left:5px;top:270.2px;width:10.5px;height:15.6px;background:#f0f0f0"></div>
<div class="a" style="left:5px;top:284.8px;width:10px;height:1px;background:#a0a0a0"></div>
<div class="a" style="left:15.5px;top:284.8px;width:963.5px;height:1px;background:#d6cbbb"></div>
<div class="a" style="left:15px;top:270.2px;width:1px;height:15.6px;background:#a8a8a8"></div>
<div class="a" style="left:75px;top:270.2px;width:1px;height:15.6px;background:#d0c8bc"></div>
<div class="a" style="left:136px;top:270.2px;width:1px;height:15.6px;background:#d0c8bc"></div>
<div class="a" style="left:184px;top:270.2px;width:1px;height:15.6px;background:#d0c8bc"></div>
<div class="a" style="left:327px;top:270.2px;width:1px;height:15.6px;background:#d0c8bc"></div>
<div class="a" style="left:396px;top:270.2px;width:1px;height:15.6px;background:#d0c8bc"></div>
<div class="a" style="left:444px;top:270.2px;width:1px;height:15.6px;background:#d0c8bc"></div>
<div class="a" style="left:509px;top:270.2px;width:1px;height:15.6px;background:#d0c8bc"></div>
<div class="a" style="left:600px;top:270.2px;width:1px;height:15.6px;background:#d0c8bc"></div>
<div class="a" style="left:830px;top:270.2px;width:1px;height:15.6px;background:#d0c8bc"></div>
<div class="t" style="left:15.71px;top:274.00px;font-size:9.8px;line-height:9.8px;color:#111;-webkit-text-stroke:0.1px #333">MUIZ2</div>
<div class="t" style="left:78.00px;top:274.00px;font-size:9.8px;line-height:9.8px;color:#111;transform:scaleX(1.0169);-webkit-text-stroke:0.1px #333">26.11.2022.</div>
<div class="t" style="left:447.85px;top:274.00px;font-size:9.8px;line-height:9.8px;color:#111;transform:scaleX(0.9296);-webkit-text-stroke:0.1px #333">Sagatave</div>
<div class="t" style="left:510.94px;top:274.00px;font-size:9.8px;line-height:9.8px;color:#111;transform:scaleX(0.9500);-webkit-text-stroke:0.1px #333">Sagatavots</div>
<div class="t" style="left:601.74px;top:274.00px;font-size:9.8px;line-height:9.8px;color:#111;transform:scaleX(0.9440);-webkit-text-stroke:0.1px #333">Apmaksa Rēķ.Nr.MP 5266579;</div>
<div class="a" style="left:15.5px;top:285.79999999999995px;width:963.5px;height:15.6px;background:#fbcd8c"></div>
<div class="a" style="left:5px;top:285.79999999999995px;width:10.5px;height:15.6px;background:#f0f0f0"></div>
<div class="a" style="left:5px;top:300.4px;width:10px;height:1px;background:#a0a0a0"></div>
<div class="a" style="left:15.5px;top:300.4px;width:963.5px;height:1px;background:#d6cbbb"></div>
<div class="a" style="left:15px;top:285.79999999999995px;width:1px;height:15.6px;background:#a8a8a8"></div>
<div class="a" style="left:75px;top:285.79999999999995px;width:1px;height:15.6px;background:#d0c8bc"></div>
<div class="a" style="left:136px;top:285.79999999999995px;width:1px;height:15.6px;background:#d0c8bc"></div>
<div class="a" style="left:184px;top:285.79999999999995px;width:1px;height:15.6px;background:#d0c8bc"></div>
<div class="a" style="left:327px;top:285.79999999999995px;width:1px;height:15.6px;background:#d0c8bc"></div>
<div class="a" style="left:396px;top:285.79999999999995px;width:1px;height:15.6px;background:#d0c8bc"></div>
<div class="a" style="left:444px;top:285.79999999999995px;width:1px;height:15.6px;background:#d0c8bc"></div>
<div class="a" style="left:509px;top:285.79999999999995px;width:1px;height:15.6px;background:#d0c8bc"></div>
<div class="a" style="left:600px;top:285.79999999999995px;width:1px;height:15.6px;background:#d0c8bc"></div>
<div class="a" style="left:830px;top:285.79999999999995px;width:1px;height:15.6px;background:#d0c8bc"></div>
<div class="t" style="left:15.71px;top:289.60px;font-size:9.8px;line-height:9.8px;color:#111;-webkit-text-stroke:0.1px #333">MUIZ2</div>
<div class="t" style="left:78.01px;top:289.60px;font-size:9.8px;line-height:9.8px;color:#111;-webkit-text-stroke:0.1px #333">03.12.2022.</div>
<div class="t" style="left:447.85px;top:289.60px;font-size:9.8px;line-height:9.8px;color:#111;transform:scaleX(0.9296);-webkit-text-stroke:0.1px #333">Sagatave</div>
<div class="t" style="left:510.94px;top:289.60px;font-size:9.8px;line-height:9.8px;color:#111;transform:scaleX(0.9500);-webkit-text-stroke:0.1px #333">Sagatavots</div>
<div class="t" style="left:601.74px;top:289.60px;font-size:9.8px;line-height:9.8px;color:#111;transform:scaleX(0.9440);-webkit-text-stroke:0.1px #333">Apmaksa Rēķ.Nr.MP 5267979;</div>
<div class="a" style="left:15.5px;top:301.4px;width:963.5px;height:15.6px;background:#fbcd8c"></div>
<div class="a" style="left:5px;top:301.4px;width:10.5px;height:15.6px;background:#f0f0f0"></div>
<div class="a" style="left:5px;top:316.0px;width:10px;height:1px;background:#a0a0a0"></div>
<div class="a" style="left:15.5px;top:316.0px;width:963.5px;height:1px;background:#d6cbbb"></div>
<div class="a" style="left:15px;top:301.4px;width:1px;height:15.6px;background:#a8a8a8"></div>
<div class="a" style="left:75px;top:301.4px;width:1px;height:15.6px;background:#d0c8bc"></div>
<div class="a" style="left:136px;top:301.4px;width:1px;height:15.6px;background:#d0c8bc"></div>
<div class="a" style="left:184px;top:301.4px;width:1px;height:15.6px;background:#d0c8bc"></div>
<div class="a" style="left:327px;top:301.4px;width:1px;height:15.6px;background:#d0c8bc"></div>
<div class="a" style="left:396px;top:301.4px;width:1px;height:15.6px;background:#d0c8bc"></div>
<div class="a" style="left:444px;top:301.4px;width:1px;height:15.6px;background:#d0c8bc"></div>
<div class="a" style="left:509px;top:301.4px;width:1px;height:15.6px;background:#d0c8bc"></div>
<div class="a" style="left:600px;top:301.4px;width:1px;height:15.6px;background:#d0c8bc"></div>
<div class="a" style="left:830px;top:301.4px;width:1px;height:15.6px;background:#d0c8bc"></div>
<div class="t" style="left:15.71px;top:305.20px;font-size:9.8px;line-height:9.8px;color:#111;-webkit-text-stroke:0.1px #333">MUIZ2</div>
<div class="t" style="left:78.01px;top:305.20px;font-size:9.8px;line-height:9.8px;color:#111;-webkit-text-stroke:0.1px #333">04.12.2022.</div>
<div class="t" style="left:447.85px;top:305.20px;font-size:9.8px;line-height:9.8px;color:#111;transform:scaleX(0.9296);-webkit-text-stroke:0.1px #333">Sagatave</div>
<div class="t" style="left:510.94px;top:305.20px;font-size:9.8px;line-height:9.8px;color:#111;transform:scaleX(0.9500);-webkit-text-stroke:0.1px #333">Sagatavots</div>
<div class="t" style="left:601.74px;top:305.20px;font-size:9.8px;line-height:9.8px;color:#111;transform:scaleX(0.9440);-webkit-text-stroke:0.1px #333">Apmaksa Rēķ.Nr.2022 26950;</div>
<div class="a" style="left:15.5px;top:317.0px;width:963.5px;height:15.6px;background:#fbcd8c"></div>
<div class="a" style="left:5px;top:317.0px;width:10.5px;height:15.6px;background:#f0f0f0"></div>
<div class="a" style="left:5px;top:331.6px;width:10px;height:1px;background:#a0a0a0"></div>
<div class="a" style="left:15.5px;top:331.6px;width:963.5px;height:1px;background:#d6cbbb"></div>
<div class="a" style="left:15px;top:317.0px;width:1px;height:15.6px;background:#a8a8a8"></div>
<div class="a" style="left:75px;top:317.0px;width:1px;height:15.6px;background:#d0c8bc"></div>
<div class="a" style="left:136px;top:317.0px;width:1px;height:15.6px;background:#d0c8bc"></div>
<div class="a" style="left:184px;top:317.0px;width:1px;height:15.6px;background:#d0c8bc"></div>
<div class="a" style="left:327px;top:317.0px;width:1px;height:15.6px;background:#d0c8bc"></div>
<div class="a" style="left:396px;top:317.0px;width:1px;height:15.6px;background:#d0c8bc"></div>
<div class="a" style="left:444px;top:317.0px;width:1px;height:15.6px;background:#d0c8bc"></div>
<div class="a" style="left:509px;top:317.0px;width:1px;height:15.6px;background:#d0c8bc"></div>
<div class="a" style="left:600px;top:317.0px;width:1px;height:15.6px;background:#d0c8bc"></div>
<div class="a" style="left:830px;top:317.0px;width:1px;height:15.6px;background:#d0c8bc"></div>
<div class="t" style="left:15.71px;top:320.80px;font-size:9.8px;line-height:9.8px;color:#111;-webkit-text-stroke:0.1px #333">MUIZ2</div>
<div class="t" style="left:78.01px;top:320.80px;font-size:9.8px;line-height:9.8px;color:#111;-webkit-text-stroke:0.1px #333">09.12.2022.</div>
<div class="t" style="left:447.85px;top:320.80px;font-size:9.8px;line-height:9.8px;color:#111;transform:scaleX(0.9296);-webkit-text-stroke:0.1px #333">Sagatave</div>
<div class="t" style="left:510.94px;top:320.80px;font-size:9.8px;line-height:9.8px;color:#111;transform:scaleX(0.9500);-webkit-text-stroke:0.1px #333">Sagatavots</div>
<div class="t" style="left:601.74px;top:320.80px;font-size:9.8px;line-height:9.8px;color:#111;transform:scaleX(0.9440);-webkit-text-stroke:0.1px #333">Apmaksa Rēķ.Nr.AMK 062697;</div>
<div class="a" style="left:15.5px;top:332.6px;width:963.5px;height:15.6px;background:#fbcd8c"></div>
<div class="a" style="left:5px;top:332.6px;width:10.5px;height:15.6px;background:#f0f0f0"></div>
<div class="a" style="left:5px;top:347.20000000000005px;width:10px;height:1px;background:#a0a0a0"></div>
<div class="a" style="left:15.5px;top:347.20000000000005px;width:963.5px;height:1px;background:#d6cbbb"></div>
<div class="a" style="left:15px;top:332.6px;width:1px;height:15.6px;background:#a8a8a8"></div>
<div class="a" style="left:75px;top:332.6px;width:1px;height:15.6px;background:#d0c8bc"></div>
<div class="a" style="left:136px;top:332.6px;width:1px;height:15.6px;background:#d0c8bc"></div>
<div class="a" style="left:184px;top:332.6px;width:1px;height:15.6px;background:#d0c8bc"></div>
<div class="a" style="left:327px;top:332.6px;width:1px;height:15.6px;background:#d0c8bc"></div>
<div class="a" style="left:396px;top:332.6px;width:1px;height:15.6px;background:#d0c8bc"></div>
<div class="a" style="left:444px;top:332.6px;width:1px;height:15.6px;background:#d0c8bc"></div>
<div class="a" style="left:509px;top:332.6px;width:1px;height:15.6px;background:#d0c8bc"></div>
<div class="a" style="left:600px;top:332.6px;width:1px;height:15.6px;background:#d0c8bc"></div>
<div class="a" style="left:830px;top:332.6px;width:1px;height:15.6px;background:#d0c8bc"></div>
<div class="t" style="left:15.71px;top:336.40px;font-size:9.8px;line-height:9.8px;color:#111;-webkit-text-stroke:0.1px #333">MUIZ2</div>
<div class="t" style="left:78.01px;top:336.40px;font-size:9.8px;line-height:9.8px;color:#111;-webkit-text-stroke:0.1px #333">10.12.2022.</div>
<div class="t" style="left:447.85px;top:336.40px;font-size:9.8px;line-height:9.8px;color:#111;transform:scaleX(0.9296);-webkit-text-stroke:0.1px #333">Sagatave</div>
<div class="t" style="left:510.94px;top:336.40px;font-size:9.8px;line-height:9.8px;color:#111;transform:scaleX(0.9500);-webkit-text-stroke:0.1px #333">Sagatavots</div>
<div class="t" style="left:601.74px;top:336.40px;font-size:9.8px;line-height:9.8px;color:#111;transform:scaleX(0.9440);-webkit-text-stroke:0.1px #333">Apmaksa Rēķ.Nr.KEK 000147092;</div>
<div class="a" style="left:15.5px;top:348.2px;width:963.5px;height:15.6px;background:#fbcd8c"></div>
<div class="a" style="left:5px;top:348.2px;width:10.5px;height:15.6px;background:#f0f0f0"></div>
<div class="a" style="left:5px;top:362.8px;width:10px;height:1px;background:#a0a0a0"></div>
<div class="a" style="left:15.5px;top:362.8px;width:963.5px;height:1px;background:#d6cbbb"></div>
<div class="a" style="left:15px;top:348.2px;width:1px;height:15.6px;background:#a8a8a8"></div>
<div class="a" style="left:75px;top:348.2px;width:1px;height:15.6px;background:#d0c8bc"></div>
<div class="a" style="left:136px;top:348.2px;width:1px;height:15.6px;background:#d0c8bc"></div>
<div class="a" style="left:184px;top:348.2px;width:1px;height:15.6px;background:#d0c8bc"></div>
<div class="a" style="left:327px;top:348.2px;width:1px;height:15.6px;background:#d0c8bc"></div>
<div class="a" style="left:396px;top:348.2px;width:1px;height:15.6px;background:#d0c8bc"></div>
<div class="a" style="left:444px;top:348.2px;width:1px;height:15.6px;background:#d0c8bc"></div>
<div class="a" style="left:509px;top:348.2px;width:1px;height:15.6px;background:#d0c8bc"></div>
<div class="a" style="left:600px;top:348.2px;width:1px;height:15.6px;background:#d0c8bc"></div>
<div class="a" style="left:830px;top:348.2px;width:1px;height:15.6px;background:#d0c8bc"></div>
<div class="t" style="left:15.71px;top:352.00px;font-size:9.8px;line-height:9.8px;color:#111;-webkit-text-stroke:0.1px #333">MUIZ2</div>
<div class="t" style="left:78.01px;top:352.00px;font-size:9.8px;line-height:9.8px;color:#111;-webkit-text-stroke:0.1px #333">10.12.2022.</div>
<div class="t" style="left:447.85px;top:352.00px;font-size:9.8px;line-height:9.8px;color:#111;transform:scaleX(0.9296);-webkit-text-stroke:0.1px #333">Sagatave</div>
<div class="t" style="left:510.94px;top:352.00px;font-size:9.8px;line-height:9.8px;color:#111;transform:scaleX(0.9500);-webkit-text-stroke:0.1px #333">Sagatavots</div>
<div class="t" style="left:601.74px;top:352.00px;font-size:9.8px;line-height:9.8px;color:#111;transform:scaleX(0.9440);-webkit-text-stroke:0.1px #333">Apmaksa Rēķ.Nr.MP 5269519;MP 5269652;MP 526...</div>
<svg class="a" style="left:6px;top:210px;" width="7" height="11" viewBox="0 0 7 11"><path d="M0.8 0.5 L6 5.2 L0.8 10 Z" fill="#000"/></svg>
<div class="a" style="left:979px;top:171.5px;width:15px;height:487.5px;background:#f0f0f0"></div>
<svg class="a" style="left:982px;top:176px;" width="10" height="7" viewBox="0 0 10 7"><path d="M1 5.5 L4.5 2 L8 5.5" fill="none" stroke="#5a5a5a" stroke-width="1.7"/></svg>
<div class="a" style="left:980.2px;top:208px;width:12.7px;height:239.3px;background:#cdcdcd"></div>
<svg class="a" style="left:982px;top:647px;" width="10" height="8" viewBox="0 0 10 8"><path d="M1 1.5 L4.5 5 L8 1.5" fill="none" stroke="#5a5a5a" stroke-width="1.7"/></svg>
<div class="a" style="left:3px;top:659px;width:976px;height:15px;background:#f0f0f0"></div>
<div class="a" style="left:994px;top:659px;width:2px;height:16px;background:#f0f0f0"></div>
<svg class="a" style="left:8px;top:661px;" width="8" height="10" viewBox="0 0 8 10"><path d="M6 1.5 L2.5 5 L6 8.5" fill="none" stroke="#5a5a5a" stroke-width="1.7"/></svg>
<div class="a" style="left:20px;top:659px;width:14.6px;height:13px;background:#cdcdcd"></div>
<svg class="a" style="left:968px;top:661px;" width="8" height="10" viewBox="0 0 8 10"><path d="M2 1.5 L5.5 5 L2 8.5" fill="none" stroke="#5a5a5a" stroke-width="1.7"/></svg>
<div class="a" style="left:365px;top:309.9px;width:268.29999999999995px;height:94.40000000000003px;background:#f0f0f0;border:1px solid #8a8a8a;box-shadow:0 0 6px rgba(0,0,0,0.18)"></div>
<div class="a" style="left:366px;top:310.9px;width:266.29999999999995px;height:24.100000000000023px;background:#017acc"></div>
<div class="t" style="left:449.63px;top:316.99px;font-size:11px;line-height:11px;color:#dce8f5;transform:scaleX(1.1742)">ka</div>
<svg class="a" style="left:611px;top:317px;" width="12" height="12" viewBox="0 0 12 12"><path d="M2 2 L9.1 9.1 M9.1 2 L2 9.1" stroke="#fff" stroke-width="1.15"/></svg>
<div class="t" style="left:449.43px;top:345.84px;font-size:10px;line-height:10px;color:#111;transform:scaleX(0.9427)">izveidota veiksmīgi.</div>
<div class="t" style="left:379.42px;top:363.04px;font-size:10px;line-height:10px;color:#111;transform:scaleX(0.9600)">Notiek parakstīšana...</div>
<div class="a" style="left:366px;top:373.2px;width:266.29999999999995px;height:1px;background:#c8c8c8"></div>
<div class="a" style="left:366px;top:374.2px;width:266.29999999999995px;height:1px;background:#fafafa"></div>
<div class="a" style="left:371.2px;top:379.9px;width:90.3px;height:19.6px;background:#fdfdfd;border:1px solid #c4c4c4"></div>
<div class="t" style="left:399.79px;top:385.34px;font-size:10px;line-height:10px;color:#3c3c3c;transform:scaleX(1.0103)">Nosūtīt</div>
<div class="a" style="left:479.7px;top:379.9px;width:64.7px;height:19.6px;background:#fdfdfd;border:1.3px solid #3c8ad8"></div>
<div class="t" style="left:491.51px;top:385.34px;font-size:10px;line-height:10px;color:#333;transform:scaleX(0.9851)">Parakstīt</div>
<div class="a" style="left:562.4px;top:379.9px;width:64.4px;height:19.6px;background:#fdfdfd;border:1px solid #c4c4c4"></div>
<div class="t" style="left:584.84px;top:385.34px;font-size:10px;line-height:10px;color:#3c3c3c;transform:scaleX(0.9262)">Labi</div>
<div class="a" style="left:136.2px;top:175px;width:313.6px;height:188.5px;background:#fff;border:1px solid #8a8a8a;box-shadow:1px 2px 8px rgba(0,0,0,0.25)"></div>
<div class="a" style="left:137.2px;top:327.2px;width:311.6px;height:35.30000000000001px;background:#f0f0f0;border-top:1px solid #dfdfdf"></div>
<div class="t" style="left:138.87px;top:180.61px;font-size:10.5px;line-height:10.5px;color:#111;transform:scaleX(1.0063)">Kļūda!</div>
<svg class="a" style="left:430px;top:180px;" width="12" height="12" viewBox="0 0 12 12"><path d="M2 2 L11 10.8 M11 2 L2 10.8" stroke="#262626" stroke-width="1"/></svg>
<svg class="a" style="left:145px;top:206px;" width="29" height="29" viewBox="0 0 29 29"><circle cx="14.5" cy="13.8" r="12.6" fill="#ee4419" stroke="#c8381a" stroke-width="0.7"/><path d="M8.2 7.5 L20.8 20.1 M20.8 7.5 L8.2 20.1" stroke="#fff" stroke-width="1.9"/></svg>
<div class="t" style="left:181.80px;top:212.87px;font-size:10.2px;line-height:10.2px;color:#111;transform:scaleX(0.9808)">TFTGMainFormBase: Nevar parakstīt maksājumu</div>
<div class="t" style="left:181.77px;top:225.80px;font-size:10.2px;line-height:10.2px;color:#111;transform:scaleX(1.0253)">uzdevumu paku! Kļūda, veidojot un parakstot</div>
<div class="t" style="left:181.74px;top:238.73px;font-size:10.2px;line-height:10.2px;color:#111;transform:scaleX(1.0725)">dokumentu!</div>
<div class="t" style="left:181.78px;top:251.66px;font-size:10.2px;line-height:10.2px;color:#111;transform:scaleX(1.0103)">A Java exception occurred</div>
<div class="t" style="left:181.80px;top:264.59px;font-size:10.2px;line-height:10.2px;color:#111;transform:scaleX(0.9800)">lv.fms.sebb.SEBBException</div>
<div class="t" style="left:181.79px;top:277.52px;font-size:10.2px;line-height:10.2px;color:#111">Payment signing failed: Reason -1: Supplied key</div>
<div class="t" style="left:181.79px;top:290.45px;font-size:10.2px;line-height:10.2px;color:#111;transform:scaleX(0.9910)">(sun.security.ec.ECPublicKeyImpl) is not a RSAPublicKey</div>
<div class="t" style="left:181.81px;top:303.38px;font-size:10.2px;line-height:10.2px;color:#111;transform:scaleX(0.9648)">instance (3.605.605.12)</div>
<div class="a" style="left:382.4px;top:336.4px;width:56.9px;height:17.6px;background:#e1e1e1;border:2px solid #1f76d6"></div>
<div class="t" style="left:401.17px;top:341.04px;font-size:10px;line-height:10px;color:#111;transform:scaleX(1.0561)">Labi</div>
<svg class="a" style="left:13px;top:723px;" width="17" height="18" viewBox="0 0 17 18"><path d="M0.8 3.6 L6.6 2.8 V8.4 H0.8 Z M7.8 2.6 L15.2 1.5 V8.4 H7.8 Z M0.8 9.7 H6.6 V15.4 L0.8 14.6 Z M7.8 9.7 H15.2 V16.6 L7.8 15.6 Z" fill="#fff"/></svg>
<svg class="a" style="left:53px;top:723px;" width="18" height="18" viewBox="0 0 18 18"><circle cx="11.4" cy="6.9" r="4.8" fill="none" stroke="#fff" stroke-width="1.3"/><path d="M7.9 10.4 L2.6 15.8" stroke="#fff" stroke-width="1.4"/></svg>
<svg class="a" style="left:95px;top:723px;" width="18" height="18" viewBox="0 0 18 18"><circle cx="8.75" cy="9" r="5.8" fill="none" stroke="#fff" stroke-width="1.7"/></svg>
<svg class="a" style="left:136px;top:722px;" width="19" height="19" viewBox="0 0 19 19"><g fill="none" stroke="#f2f2f2" stroke-width="1.2"><path d="M2.2 2.8 H13.6 M2.2 15.6 H13.6"/><rect x="4" y="5.2" width="8" height="8"/><path d="M15.8 8.5 V15.8"/></g><rect x="14.8" y="4.2" width="2.4" height="2.4" fill="#fff"/></svg>
<svg class="a" style="left:178px;top:720px;" width="24" height="24" viewBox="0 0 24 24"><defs><linearGradient id="eg" x1="0" y1="0.3" x2="1" y2="0.6"><stop offset="0" stop-color="#2a9de8"/><stop offset="0.45" stop-color="#30c0d8"/><stop offset="1" stop-color="#72e04c"/></linearGradient><linearGradient id="eb" x1="0" y1="0" x2="0.6" y2="1"><stop offset="0" stop-color="#1f8ae0"/><stop offset="1" stop-color="#0d5cb8"/></linearGradient></defs><circle cx="11.75" cy="11.4" r="10.6" fill="url(#eg)"/><path d="M1.15 11.4 A10.6 10.6 0 0 0 20.9 16.6 Q17 19.6 13.2 18.2 Q8.6 16.4 8.8 12 Q9.2 8.4 13 7.6 Q6.4 5.6 1.15 11.4 Z" fill="url(#eb)"/><circle cx="11.9" cy="11.8" r="2.7" fill="#23373f"/><path d="M12.6 14.3 Q16.4 16.6 21 16" fill="none" stroke="#23373f" stroke-width="1"/></svg>
<svg class="a" style="left:221px;top:722px;" width="22" height="19" viewBox="0 0 22 19"><path d="M1.8 3 H8.6 L10.4 4.6 H20.6 V17.2 H1.8 Z" fill="#f4c542"/><path d="M1.8 3 H8.6 L10.4 4.6 V6.4 H1.8 Z" fill="#e09a1a"/><rect x="1.8" y="6.4" width="18.8" height="10.8" fill="#f8d775"/><path d="M5.6 17.2 V11.4 H16.8 V17.2 H14.2 V13.8 H8.2 V17.2 Z" fill="#3a96dd"/></svg>
<svg class="a" style="left:263px;top:720px;" width="24" height="24" viewBox="0 0 24 24"><circle cx="11.75" cy="11.6" r="10.6" fill="#e94235"/><path d="M11.75 11.6 L21.9 8.2 A10.6 10.6 0 0 1 8.4 21.7 Z" fill="#fbbc05"/><path d="M11.75 11.6 L8.4 21.7 A10.6 10.6 0 0 1 2.2 6.8 Z" fill="#34a853"/><circle cx="11.75" cy="11.6" r="4.9" fill="#fff"/><circle cx="11.75" cy="11.6" r="3.8" fill="#4285f4"/></svg>
<svg class="a" style="left:305px;top:721px;" width="25" height="21" viewBox="0 0 25 21"><rect x="7" y="1.2" width="15.9" height="18.5" rx="0.8" fill="#21a366"/><rect x="7" y="7.4" width="15.9" height="6.2" fill="#107c41"/><rect x="7" y="13.6" width="15.9" height="6.1" fill="#185c37"/><rect x="15" y="1.2" width="7.9" height="6.2" fill="#33c481"/><rect x="1.9" y="5.4" width="11.2" height="10.6" rx="0.8" fill="#107c41"/><text x="4.2" y="14" font-family="Liberation Sans" font-weight="700" font-size="9.5" fill="#fff">X</text></svg>
<svg class="a" style="left:347px;top:721px;" width="25" height="21" viewBox="0 0 25 21"><rect x="8" y="1.2" width="15" height="10" fill="#0364b8"/><rect x="15.5" y="1.2" width="7.5" height="5" fill="#28a8ea"/><rect x="8" y="6.2" width="7.5" height="5" fill="#0078d4"/><path d="M8 10 L23 10 V19.7 H8 Z" fill="#1490df"/><path d="M8 19.7 L15.5 13 L23 19.7 Z" fill="#28a8ea"/><rect x="2" y="5.4" width="11.2" height="10.6" rx="0.8" fill="#0a5fb4"/><circle cx="7.6" cy="10.7" r="3.4" fill="none" stroke="#fff" stroke-width="1.6"/></svg>
<svg class="a" style="left:390px;top:721px;" width="25" height="21" viewBox="0 0 25 21"><rect x="7" y="1.2" width="15.8" height="18.5" rx="0.8" fill="#41a5ee"/><rect x="7" y="6" width="15.8" height="4.7" fill="#2b7cd3"/><rect x="7" y="10.7" width="15.8" height="4.7" fill="#185abd"/><rect x="7" y="15.4" width="15.8" height="4.3" fill="#103f91"/><rect x="1.8" y="5.3" width="11" height="10.5" rx="0.8" fill="#185abd"/><text x="2.6" y="13.8" font-family="Liberation Sans" font-weight="700" font-size="8.6" fill="#fff">W</text></svg>
<svg class="a" style="left:434px;top:721px;" width="22" height="22" viewBox="0 0 22 22"><rect x="1" y="1" width="19.6" height="19.3" rx="1" fill="#fcd116"/><path d="M20.6 11.6 V19.3 Q20.6 20.3 19.6 20.3 H11.8 L12 12 Z" fill="#3b3a39"/><path d="M20.6 12.6 L12.6 20.3 H19.6 Q20.6 20.3 20.6 19.3 Z" fill="#eab700"/></svg>
<div class="a" style="left:466.6px;top:714.5px;width:41.3px;height:34.5px;background:#4f5d66"></div>
<div class="a" style="left:466.6px;top:747px;width:41.3px;height:2px;background:#90c4ee"></div>
<svg class="a" style="left:475px;top:719px;" width="25" height="25" viewBox="0 0 25 25"><circle cx="12.4" cy="12.6" r="10.4" fill="#0a78d2"/><g fill="#fff"><circle cx="6.5" cy="7.6" r="1"/><circle cx="4.5" cy="10.2" r="1"/><circle cx="8.0" cy="9.6" r="1"/><circle cx="5.8" cy="11.8" r="1"/><circle cx="9.8" cy="12.0" r="1"/><circle cx="7.3" cy="13.7" r="1"/><circle cx="12.2" cy="10.0" r="1"/><circle cx="14.4" cy="8.5" r="1"/><circle cx="11.5" cy="14.4" r="1"/><circle cx="9.1" cy="15.9" r="1"/><circle cx="13.9" cy="12.6" r="1"/><circle cx="16.4" cy="11.1" r="1"/><circle cx="18.3" cy="9.6" r="1"/><circle cx="16.6" cy="7.4" r="1"/><circle cx="13.3" cy="4.5" r="1"/><circle cx="10.6" cy="5.1" r="1"/><circle cx="12.6" cy="6.7" r="1"/><circle cx="15.0" cy="5.8" r="1"/><circle cx="19.7" cy="12.0" r="1"/><circle cx="17.5" cy="13.5" r="1"/><circle cx="20.6" cy="14.4" r="1"/><circle cx="18.8" cy="15.9" r="1"/><circle cx="13.3" cy="17.0" r="1"/><circle cx="10.6" cy="18.4" r="1"/><circle cx="14.4" cy="19.5" r="1"/><circle cx="11.7" cy="20.6" r="1"/></g></svg>
<svg class="a" style="left:764px;top:727px;" width="14" height="10" viewBox="0 0 14 10"><path d="M1.8 7.6 L6.8 2.4 L11.8 7.6" fill="none" stroke="#fff" stroke-width="1.3"/></svg>
<svg class="a" style="left:785px;top:723px;" width="14" height="17" viewBox="0 0 14 17"><rect x="2" y="4.5" width="7.6" height="8" rx="1.3" fill="none" stroke="#fff" stroke-width="1.2"/><path d="M9.6 7 L12 5.4 V11.6 L9.6 10" fill="none" stroke="#fff" stroke-width="1.1"/><path d="M3 2 Q6 0.8 9 2 M3 15 Q6 16.2 9 15" fill="none" stroke="#fff" stroke-width="1"/></svg>
<svg class="a" style="left:804px;top:725px;" width="18" height="13" viewBox="0 0 18 13"><path d="M3.6 11 Q1 11 1 8.6 Q1 6.2 3.6 6.2 Q4.6 3 8 3 Q11.2 3 12.4 5.8 Q16.6 5.6 16.6 8.6 Q16.6 11 14 11 Z" fill="#f4f4f4"/></svg>
<svg class="a" style="left:825px;top:724px;" width="17" height="15" viewBox="0 0 17 15"><rect x="4.6" y="2.5" width="10.6" height="7.6" fill="none" stroke="#fff" stroke-width="1.1"/><path d="M9.9 10.1 V13.2 M6.6 13.4 H13.2" stroke="#fff" stroke-width="1.1"/><rect x="1.5" y="1.5" width="4" height="3.2" fill="#20303a" stroke="#fff" stroke-width="0.9"/><path d="M3.5 4.7 V11" stroke="#fff" stroke-width="0.9"/></svg>
<svg class="a" style="left:846px;top:725px;" width="16" height="13" viewBox="0 0 16 13"><path d="M1.8 4.2 H4.2 L7.4 1.4 V11.6 L4.2 8.8 H1.8 Z" fill="none" stroke="#fff" stroke-width="1.1"/><path d="M9.6 4.4 L13.6 8.4 M13.6 4.4 L9.6 8.4" stroke="#fff" stroke-width="1.1"/></svg>
<div class="t" style="left:871.71px;top:727.11px;font-size:10.5px;line-height:10.5px;color:#fff;transform:scaleX(0.9344)">LAV</div>
<div class="t" style="left:912.19px;top:719.11px;font-size:10.5px;line-height:10.5px;color:#fff;transform:scaleX(0.9757)">11:17</div>
<div class="t" style="left:901.22px;top:734.61px;font-size:10.5px;line-height:10.5px;color:#fff;transform:scaleX(0.9234)">16.11.2022</div>
<svg class="a" style="left:962px;top:722px;" width="18" height="18" viewBox="0 0 18 18"><path d="M2 2.6 H15.8 V12.6 H10.9 L8.9 14.8 L6.9 12.6 H2 Z" fill="none" stroke="#f2f2f2" stroke-width="1.2"/></svg>
<div class="a" style="left:993.5px;top:714.5px;width:1px;height:34.5px;background:#3a4a58"></div>
</body></html>
